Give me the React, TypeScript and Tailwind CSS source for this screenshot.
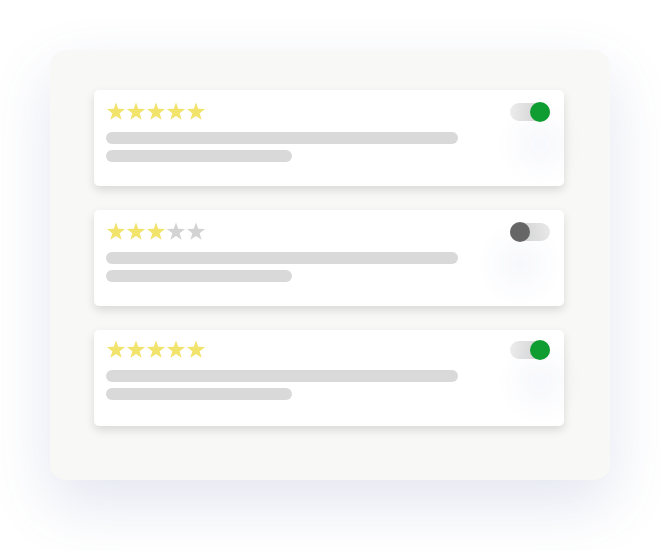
import React from 'react';

type Review = { rating: number; enabled: boolean; top: string };

const reviews: Review[] = [
  { rating: 5, enabled: true, top: 'pt-[12px]' },
  { rating: 3, enabled: false, top: 'pt-[12px]' },
  { rating: 5, enabled: true, top: 'pt-[10px]' },
];

function Star({ filled }: { filled: boolean }) {
  return (
    <svg width="20" height="19" viewBox="0 0 24 23" className="shrink-0">
      <polygon
        points="12,0.5 14.7,8.3 23,8.4 16.4,13.5 18.8,21.6 12,16.8 5.2,21.6 7.6,13.5 1,8.4 9.3,8.3"
        fill={filled ? '#f1e36b' : '#d3d3d3'}
      />
    </svg>
  );
}

function Toggle({ on }: { on: boolean }) {
  return (
    <div className="relative w-[40px] h-[20px] flex items-center">
      <div
        className={
          on
            ? 'w-full h-[18px] rounded-full bg-gradient-to-r from-[#ececec] to-[#cdcdcd]'
            : 'w-full h-[18px] rounded-full bg-gradient-to-r from-[#cfcfcf] to-[#e8e8e8]'
        }
      />
      <div
        className={
          on
            ? 'absolute right-0 top-0 w-[20px] h-[20px] rounded-full bg-[#0f9d32] shadow-[0_32px_30px_12px_rgba(80,90,180,0.055)]'
            : 'absolute left-0 top-0 w-[20px] h-[20px] rounded-full bg-[#666666] shadow-[0_32px_30px_12px_rgba(80,90,180,0.055)]'
        }
      />
    </div>
  );
}

function ReviewCard({ review }: { review: Review }) {
  return (
    <div
      className={`w-[470px] h-[96px] bg-white rounded-[5px] shadow-[0_4px_10px_rgba(0,0,0,0.13)] pl-[12px] pr-[14px] flex ${review.top}`}
    >
      <div className="flex-1 flex flex-col">
        <div className="flex h-[19px]">
          {[0, 1, 2, 3, 4].map((i) => (
            <Star key={i} filled={i < review.rating} />
          ))}
        </div>
        <div className="mt-[11px] w-[352px] h-[12px] rounded-full bg-[#d9d9d9]" />
        <div className="mt-[6px] w-[186px] h-[12px] rounded-full bg-[#d9d9d9]" />
      </div>
      <Toggle on={review.enabled} />
    </div>
  );
}

export default function App() {
  return (
    <main className="w-[660px] h-[550px] bg-white pt-[50px] pl-[50px]">
      <section className="w-[560px] h-[430px] rounded-[16px] bg-[#f8f8f6] shadow-[0_24px_60px_rgba(90,100,170,0.16)] pl-[44px] pt-[40px] flex flex-col gap-[24px]">
        {reviews.map((r, i) => (
          <ReviewCard key={i} review={r} />
        ))}
      </section>
    </main>
  );
}
